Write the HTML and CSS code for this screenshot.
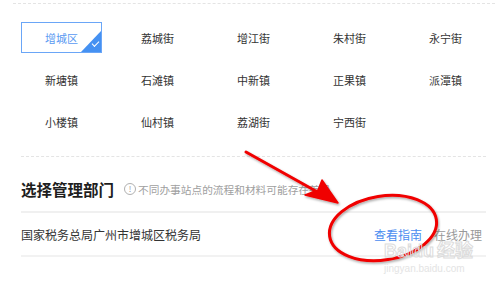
FILE: index.html
```html
<!DOCTYPE html>
<html lang="zh-CN">
<head>
    <meta charset="UTF-8">
    <meta name="viewport" content="width=device-width, initial-scale=1.0">
    <title>选择管理部门</title>

    <link rel="stylesheet" href="styles.css">
</head>
<body>

    <div class="top-line"></div>

    <div class="areas">
        <div class="area active">增城区<span class="tick"></span></div>
        <div class="area">荔城街</div>
        <div class="area">增江街</div>
        <div class="area">朱村街</div>
        <div class="area">永宁街</div>
        <div class="area">新塘镇</div>
        <div class="area">石滩镇</div>
        <div class="area">中新镇</div>
        <div class="area">正果镇</div>
        <div class="area">派潭镇</div>
        <div class="area">小楼镇</div>
        <div class="area">仙村镇</div>
        <div class="area">荔湖街</div>
        <div class="area">宁西街</div>
    </div>

    <div class="mid-line"></div>

    <div class="dept">
        <div class="dept-head">
            <h2>选择管理部门</h2>
            <span class="info">!</span>
            <span class="hint">不同办事站点的流程和材料可能存在差异</span>
        </div>
        <div class="dept-row">
            <span class="dept-name">国家税务总局广州市增城区税务局</span>
            <a class="guide" href="#">查看指南</a>
            <span class="online">在线办理</span>
        </div>
    </div>

    <!-- annotation on top of the screenshot -->
    <svg class="mark" width="500" height="286" viewBox="0 0 500 286">
        <defs>
            <filter id="blur" x="-20%" y="-20%" width="140%" height="140%">
                <feDropShadow dx="1" dy="1.5" stdDeviation="1.2" flood-color="#000" flood-opacity="0.35"/>
            </filter>
        </defs>
        <g filter="url(#blur)" fill="none" stroke="#f00000" stroke-linecap="round">
            <line x1="246" y1="152" x2="330" y2="199" stroke-width="3"/>
            <path d="M338 203 L305 195 L318 190 L322 180 Z" fill="#f00000" stroke-width="1.5" stroke-linejoin="round"/>
            <ellipse cx="383" cy="228" rx="54" ry="32" transform="rotate(-9 383 228)" stroke-width="3"/>
        </g>
    </svg>

    <div class="watermark">
        <div class="wm-big">Bai<span class="paw">du</span>经验</div>
        <div class="wm-small">jingyan.baidu.com</div>
    </div>

</body>
</html>
```

FILE: styles.css
```css
body{
    margin: 0;
    width: 500px;
    height: 286px;
    overflow: hidden;
    position: relative;
    background: #fff;
    font-family: "Noto Sans CJK SC", "Noto Sans", sans-serif;
    color: #333;
}

.top-line{
    margin: 3px 5px 0 13px;
    border-top: 1px dashed #e4e4e4;
}

.areas{
    display: grid;
    grid-template-columns: repeat(5, 81px);
    grid-auto-rows: 31px;
    column-gap: 15px;
    row-gap: 11px;
    padding: 18px 0 0 21px;
}

.area{
    position: relative;
    display: flex;
    align-items: center;
    justify-content: center;
    font-size: 11px;
    color: #333;
    box-sizing: border-box;
}

.area.active{
    border: 1px solid #6aa6f7;
    color: #5a9af2;
    overflow: hidden;
}

.area .tick{
    position: absolute;
    right: 0;
    bottom: 0;
    width: 0;
    height: 0;
    border-style: solid;
    border-width: 0 0 21px 20px;
    border-color: transparent transparent #4591f2 transparent;
}

.area .tick::after{
    content: '';
    position: absolute;
    left: -9px;
    top: 10px;
    width: 6px;
    height: 3px;
    border-left: 1.5px solid #fff;
    border-bottom: 1.5px solid #fff;
    transform: rotate(-45deg);
}

.mid-line{
    margin: 19px 14px 0 21px;
    border-top: 1px dashed #e4e4e4;
}

.dept{
    margin: 0 14px 0 21px;
}

.dept-head{
    display: flex;
    align-items: center;
    height: 44px;
    padding-top: 10px;
    border-bottom: 2px solid #f0f0f0;
}

.dept-head h2{
    margin: 0;
    font-size: 15.5px;
    font-weight: 700;
    color: #1e1e1e;
}

.info{
    display: inline-flex;
    align-items: center;
    justify-content: center;
    width: 10px;
    height: 10px;
    margin-left: 10px;
    border: 1px solid #b0b0b0;
    border-radius: 50%;
    font-size: 8px;
    line-height: 1;
    color: #999;
}

.hint{
    margin-left: 2px;
    font-size: 10.7px;
    color: #a0a0a0;
}

.dept-row{
    display: flex;
    align-items: center;
    height: 42px;
    border-bottom: 2px solid #f2f2f2;
    font-size: 12px;
}

.dept-name{
    flex: 1;
    color: #333;
}

.guide{
    color: #4a8df0;
    text-decoration: none;
}

.online{
    margin-left: 12px;
    margin-right: 4px;
    color: #999;
}

.mark{
    position: absolute;
    left: 0;
    top: 0;
    pointer-events: none;
}

.watermark{
    position: absolute;
    left: 384px;
    top: 243px;
    color: transparent;
    font-family: "Liberation Sans", "Noto Sans CJK SC", sans-serif;
    pointer-events: none;
}

.wm-big{
    font-size: 18px;
    font-weight: 700;
    line-height: 17px;
    -webkit-text-stroke: 1px #dcdcdc;
}

.wm-big .paw{
    margin-right: 3px;
}

.wm-small{
    margin-top: 3px;
    font-size: 10px;
    line-height: 11px;
    color: #e4e4e4;
}
```
